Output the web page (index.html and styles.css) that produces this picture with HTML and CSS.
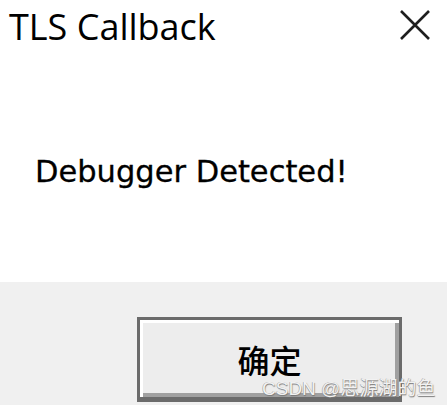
FILE: index.html
```html
<!DOCTYPE html>
<html lang="en">
<head>
    <meta charset="UTF-8">
    <meta name="viewport" content="width=device-width, initial-scale=1.0">
    <title>TLS Callback</title>
    <link rel="stylesheet" href="styles.css">
</head>
<body>
    <div class="dialog">
        <div class="titlebar">
            <span class="title">TLS Callback</span>
            <button class="close" aria-label="Close">
                <svg width="30" height="30" viewBox="0 0 30 30">
                    <path d="M1 1 L29 29 M29 1 L1 29" stroke="#1e1e1e" stroke-width="2.6" fill="none"/>
                </svg>
            </button>
        </div>
        <div class="content">
            <p class="message">Debugger Detected!</p>
        </div>
        <div class="footer">
            <button class="ok">确定</button>
            <span class="watermark">CSDN @思源湖的鱼</span>
        </div>
    </div>
</body>
</html>
```

FILE: styles.css
```css
body {
    margin: 0;
    padding: 0;
    background-color: #fff;
    font-family: "Noto Sans", "Open Sans", sans-serif;
}

.dialog {
    width: 447px;
    height: 405px;
    display: flex;
    flex-direction: column;
    position: relative;
    overflow: hidden;
}

.titlebar {
    height: 56px;
    display: flex;
    justify-content: space-between;
    align-items: flex-start;
    padding: 0 17px 0 9px;
}

.title {
    font-family: "Open Sans", sans-serif;
    font-size: 36px;
    line-height: 54px;
    color: #000;
}

.close {
    margin-top: 10px;
    padding: 0;
    border: none;
    background: none;
    width: 30px;
    height: 30px;
}

.close svg {
    display: block;
}

.content {
    flex: 1;
    padding-left: 35px;
}

.message {
    margin: 96px 0 0;
    font-family: "DejaVu Sans", sans-serif;
    font-size: 30.5px;
    line-height: 40px;
    color: #000;
    -webkit-text-stroke: 0.3px #000;
}

.footer {
    height: 123px;
    background-color: #f0f0f0;
    padding: 35px 0 0 137px;
    box-sizing: border-box;
}

.ok {
    width: 265px;
    height: 85px;
    box-sizing: border-box;
    background-color: #ededed;
    border: 3px solid #6b6b6b;
    border-bottom-width: 5px;
    box-shadow: inset 3px 3px 0 #fff, inset -4px -4px 0 #a0a0a0;
    font-family: "Noto Sans CJK SC", sans-serif;
    font-size: 32px;
    font-weight: 500;
    color: #000;
    padding: 0;
}

.watermark {
    position: absolute;
    left: 262px;
    top: 373px;
    font-family: "Liberation Sans", "Noto Sans CJK SC", sans-serif;
    font-size: 19px;
    color: #f2f2f2;
    text-shadow: 0.5px 0.5px 1px #777, -0.5px -0.5px 0.5px #999;
}
```
